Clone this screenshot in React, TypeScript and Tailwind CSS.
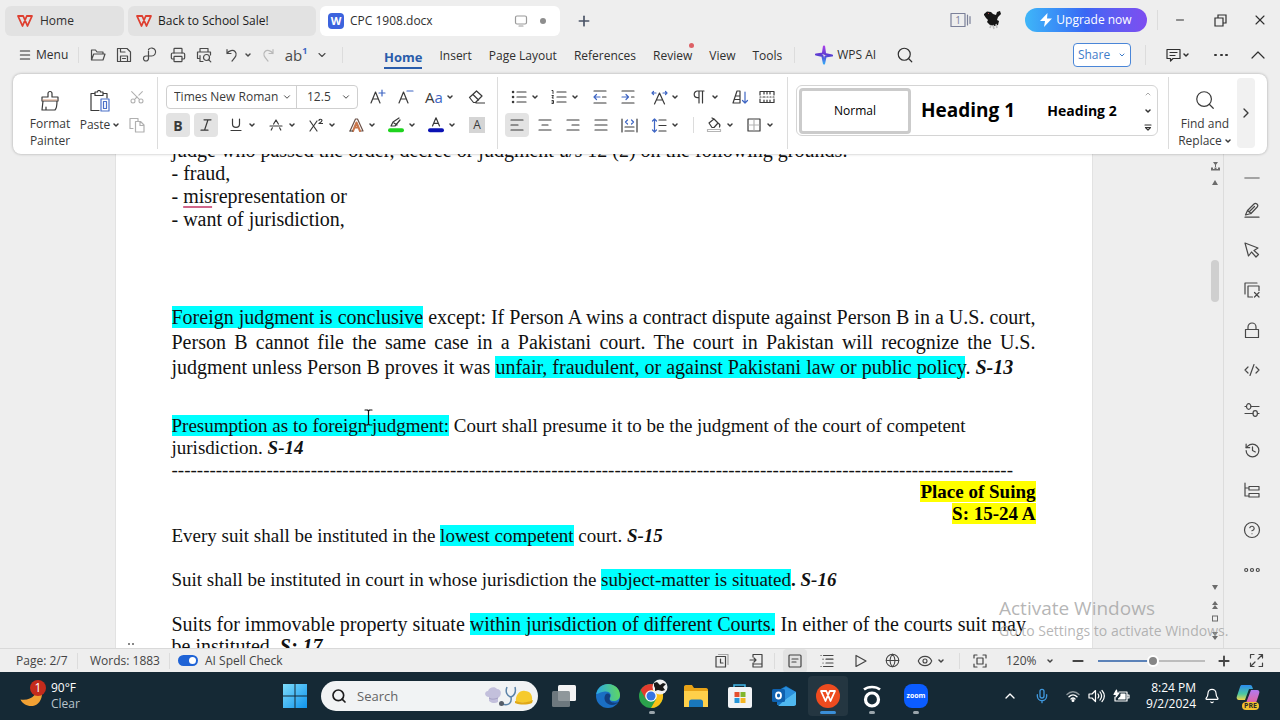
import { ReactNode } from 'react';
import {
  Bell,
  ChevronDown,
  ChevronRight,
  ChevronUp,
  CircleHelp,
  Eye,
  Globe,
  History,
  Menu,
  Mic,
  Minus,
  Plus,
  Printer,
  Scissors,
  Search,
  X,
} from 'lucide-react';

interface DrawingProps {
  w?: number;
  h?: number;
  children: ReactNode;
  className?: string;
}

// Line drawing on a pixel grid, one unit per pixel
function Line({ w = 16, h = 16, children, className }: DrawingProps) {
  return (
    <svg
      width={w}
      height={h}
      viewBox={`0 0 ${w} ${h}`}
      fill="none"
      stroke="currentColor"
      strokeWidth="1.2"
      strokeLinecap="round"
      strokeLinejoin="round"
      className={`shrink-0 ${className ?? ''}`}
      aria-hidden="true"
    >
      {children}
    </svg>
  );
}

function Caret() {
  return <ChevronDown className="w-2 h-2 shrink-0" strokeWidth={4.5} />;
}

interface ToolProps {
  label: string;
  children: ReactNode;
  drop?: boolean;
  on?: boolean;
  className?: string;
}

function Tool({ label, children, drop, on, className }: ToolProps) {
  return (
    <button title={label} aria-label={label} className={`flex h-6 shrink-0 items-center ${className ?? ''}`}>
      <span className={`flex h-6 w-6 items-center justify-center rounded ${on ? 'bg-[#e3e3e3]' : ''}`}>{children}</span>
      {drop && <Caret />}
    </button>
  );
}

function Bar({ className }: { className?: string }) {
  return <div className={`w-px shrink-0 bg-[#dcdcdc] ${className ?? ''}`} />;
}

function WpsMark({ className }: { className?: string }) {
  return (
    <svg viewBox="0 0 16 12" className={className} fill="none" stroke="currentColor" strokeWidth="1.8" strokeLinejoin="round" aria-hidden="true">
      <path d="M1 1h5.200l4.300 10L15 1H9.800L5.500 11 1 1Z" />
    </svg>
  );
}

function TitleBar() {
  return (
    <header className="flex h-9 items-end text-[12px] text-[#2f2f2f]">
      <div className="flex items-end gap-1 pl-[5px]">
        <button className="flex h-[30px] w-[119px] items-center gap-[7px] rounded-md bg-[#e2e2e2] pl-3">
          <WpsMark className="w-4 h-3 text-[#de3f30]" />
          Home
        </button>
        <button className="flex h-[30px] w-[188px] items-center gap-[6px] rounded-md bg-[#e2e2e2] pl-2 text-[#1c1c1c]">
          <WpsMark className="w-4 h-3 text-[#de3f30]" />
          Back to School Sale!
        </button>
        <button className="flex h-[30px] w-60 items-center rounded-md bg-white pl-2 pr-3">
          <span className="mr-[6px] flex h-4 w-4 items-center justify-center rounded-sm bg-[#3c63dd] text-[11px] font-bold text-white">
            W
          </span>
          CPC 1908.docx
          <Line w={14} h={12} className="ml-auto text-[#9a9a9a]">
            <rect x="1.5" y="1" width="11" height="8" rx="1.5" />
            <path d="M5 11h4" />
          </Line>
          <span className="ml-3 mr-0.5 h-1.5 w-1.5 rounded-full bg-[#8d8d8d]" />
        </button>
      </div>
      <button aria-label="New tab" className="ml-4 flex h-[30px] items-center text-[#4a5366]">
        <Plus className="h-4 w-4" strokeWidth={2.5} />
      </button>

      <div className="ml-auto flex h-9 items-center pt-1">
        <button aria-label="Windows" className="relative mr-3 text-[#7b8099]">
          <Line w={21} h={16}>
            <rect x="1" y="1.5" width="14" height="13" />
            <path d="M17.5 3v10M20 4.500v7" />
          </Line>
          <span className="absolute left-0 top-0 w-4 text-center text-[10px] leading-4">1</span>
        </button>
        <svg width="20" height="20" viewBox="0 0 20 20" aria-hidden="true">
          <path
            d="M1 4 4 1.500l4 .5 2 2 3 1 1-3 3-1 1 3-3 3-1 3 2 1-1 4-4 1-4-1-3-3 1-2-2-2L1 5Z"
            fill="#151515"
          />
          <path d="m5 4 1-1" stroke="#b44" />
          <path d="m8 15-1 3m3-3 1 4m2-5 1 4" stroke="#bcbcbc" strokeWidth="1.5" />
        </svg>
        <button className="ml-[22px] flex h-6 w-[122px] items-center justify-center gap-1 rounded-full bg-linear-to-r from-[#3fb6f8] via-[#3a66f4] to-[#7d4df0] text-white">
          <svg width="12" height="14" viewBox="0 0 12 14" fill="currentColor" aria-hidden="true">
            <path d="M7.500 0 0 8h5l-1 6 8-8.500H7Z" />
          </svg>
          Upgrade now
        </button>
        <Bar className="ml-2.5 h-5" />
        <button aria-label="Minimize" className="ml-3.5 flex w-4 justify-center">
          <Minus className="h-3 w-3" strokeWidth={2} />
        </button>
        <button aria-label="Restore" className="ml-6 flex w-4 justify-center">
          <Line w={13} h={13}>
            <path d="M1 4h8v8H1zM4 4V1h8v8H9" strokeLinejoin="miter" />
          </Line>
        </button>
        <button aria-label="Close" className="ml-6 mr-3 flex w-4 justify-center">
          <X className="h-4 w-4" strokeWidth={1.7} />
        </button>
      </div>
    </header>
  );
}

const TABS = ['Insert', 'Page Layout', 'References', 'Review', 'View', 'Tools'];

function MenuRow() {
  return (
    <div className="flex h-[38px] items-center text-[12px] text-[#2f2f2f]">
      <button className="ml-[18px] flex w-12 items-center gap-1">
        <Menu className="h-3.5 w-3.5 shrink-0" strokeWidth={1.8} />
        Menu
      </button>
      <Bar className="ml-3 h-4" />
      <div className="ml-[7px] flex items-center gap-0.5 text-[#4a4a4a]">
        <Tool label="Open">
          <Line>
            <path d="M1.500 13V3h4l1.500 2h6v2M1.500 13l2.200-6H15l-2 6Z" />
          </Line>
        </Tool>
        <Tool label="Save">
          <Line>
            <path d="M1.500 1.500h9.500L14.500 5v9.500h-13ZM4.500 1.500V5H9M4.500 14.500V9h7v5.500M6.500 11.500h3" />
          </Line>
        </Tool>
        <Tool label="Export to PDF">
          <Line>
            <path d="M6.500 4v7.500a2.500 2.500 0 1 1-2.500-2.500h5.500a4 4 0 1 0-3-6.500" />
          </Line>
        </Tool>
        <Tool label="Print" className="ml-0.5">
          <Printer className="h-4 w-4" strokeWidth={1.8} />
        </Tool>
        <Tool label="Print preview">
          <Line>
            <path d="M4 5V1.500h8V5M3 11.500H1.500V5h13v3M4 8.500v6h3" />
            <circle cx="10.500" cy="10.500" r="3" />
            <path d="m12.800 12.800 2 2" />
          </Line>
        </Tool>
        <Tool label="Undo" drop className="ml-0.5">
          <Line w={14} h={14}>
            <path d="M2 1.500v4h4M2 5.500c2-3 6-4 8-2 3 3 0 6-3 9.500" />
          </Line>
        </Tool>
        <Tool label="Redo" className="ml-0.5 text-[#b9b9b9]">
          <Line w={14} h={14}>
            <path d="M12 1.500v4H8M12 5.500c-2-3-6-4-8-2-3 3 0 6 3 9.500" />
          </Line>
        </Tool>
        <Tool label="Text tools" className="ml-0.5">
          <span className="text-[15px] leading-5">ab</span>
          <sup className="text-[9px] font-bold text-[#3f66c4]">1</sup>
        </Tool>
        <Tool label="Customize">
          <ChevronDown className="h-3 w-3" strokeWidth={2.2} />
        </Tool>
      </div>
      <Bar className="ml-2 h-4" />

      <nav className="ml-[41px] flex h-full items-center gap-[17px] pt-0.5">
        <a href="#home" className="border-b-2 border-[#2a5caa] pt-[3px] text-[13px] font-bold leading-5 text-[#2a5caa]">
          Home
        </a>
        {TABS.map(tab => (
          <a key={tab} href={`#${tab}`} className="relative whitespace-nowrap">
            {tab}
            {tab === 'Review' && <span className="absolute -right-0.5 -top-1 h-[5px] w-[5px] rounded-full bg-[#dd6065]" />}
          </a>
        ))}
      </nav>
      <Bar className="ml-3 h-4" />
      <button className="ml-5 flex items-center gap-1 whitespace-nowrap">
        <svg width="18" height="20" viewBox="0 0 18 20" fill="none" strokeWidth="2.2" strokeLinejoin="round" aria-hidden="true">
          <defs>
            <linearGradient id="ai" x1="0" y1="0" x2="0" y2="1">
              <stop offset="0" stopColor="#a63fe8" />
              <stop offset="0.500" stopColor="#5a3bd0" />
              <stop offset="1" stopColor="#38a6f5" />
            </linearGradient>
          </defs>
          <path d="M9 1.500 10 9l7 1.500-6.500 1L9 18.500 7.500 11 1 9.500 8 8.500Z" stroke="url(#ai)" />
        </svg>
        WPS AI
      </button>
      <button aria-label="Search" className="ml-5">
        <Search className="h-[18px] w-[18px]" strokeWidth={1.6} />
      </button>

      <div className="ml-auto flex items-center">
        <button className="flex h-6 w-[58px] items-center justify-center gap-2 rounded-sm border border-[#4a86d8] bg-white text-[#3f7cc9]">
          Share
          <ChevronDown className="h-2 w-2" strokeWidth={3} />
        </button>
        <Bar className="ml-3.5 h-5" />
        <button aria-label="Comments" className="ml-5 flex items-center">
          <Line w={16} h={14}>
            <path d="M1 1.500h13v9H7l-2.500 2.500v-2.500H1ZM4 4.500h7M4 7.500h5" />
          </Line>
          <Caret />
        </button>
        <button aria-label="More" className="ml-6 flex w-3.5 justify-between">
          <span className="h-[2px] w-[3px] rounded-full bg-[#333]" />
          <span className="h-[2px] w-[3px] rounded-full bg-[#333]" />
          <span className="h-[2px] w-[3px] rounded-full bg-[#333]" />
        </button>
        <button aria-label="Collapse ribbon" className="ml-5 mr-3 flex w-5 justify-center">
          <Line w={14} h={8}>
            <path d="m1 7 6-6 6 6" />
          </Line>
        </button>
      </div>
    </div>
  );
}

function FontGroup() {
  return (
    <div className="flex flex-col gap-1">
      <div className="flex items-center">
        <div className="flex h-6 rounded border border-[#cfcfcf] text-[12px]">
          <label className="relative w-[130px] border-r border-[#cfcfcf]">
            <select aria-label="Font" className="h-full w-full appearance-none pl-[7px] outline-none">
              <option>Times New Roman</option>
            </select>
            <ChevronDown className="absolute right-1 top-1.5 h-2.5 w-2.5" strokeWidth={2.2} />
          </label>
          <label className="relative w-15">
            <select aria-label="Font size" className="h-full w-full appearance-none pl-2.5 outline-none">
              <option>12.5</option>
            </select>
            <ChevronDown className="absolute right-1.5 top-1.5 h-2.5 w-2.5" strokeWidth={2.2} />
          </label>
        </div>
        <Tool label="Grow font" className="ml-2">
          <Line>
            <path d="M1 14 5.500 3 10 14M2.600 10h5.800" />
            <path d="M12 1v6M9 4h6" stroke="#3f66c4" />
          </Line>
        </Tool>
        <Tool label="Shrink font" className="ml-1">
          <Line>
            <path d="M1 14 5.500 3 10 14M2.600 10h5.800" />
            <path d="M9 2h6" stroke="#3f66c4" />
          </Line>
        </Tool>
        <Tool label="Change case" drop className="ml-1 text-[15px]">
          <span>
            A<span className="text-[#3f66c4]">a</span>
          </span>
        </Tool>
        <Tool label="Clear formatting" className="ml-2.5">
          <Line w={17} h={14}>
            <path d="M1.500 7.500 8.500 1l5.500 5-6.500 6.500H5.500ZM5 4.500l5.500 5.500M8 13h8.500" />
          </Line>
        </Tool>
      </div>
      <div className="flex items-center">
        <Tool label="Bold" on>
          <span className="text-[14px] font-bold">B</span>
        </Tool>
        <Tool label="Italic" on className="ml-1">
          <Line w={12} h={12}>
            <path d="M4 .8h7M1 11.200h7M8 .8 4.500 11.200" />
          </Line>
        </Tool>
        <Tool label="Underline" drop className="ml-1.5">
          <Line w={12} h={14}>
            <path d="M2.500 1v5c0 4.500 7 4.500 7 0V1M1 12.500h10" />
          </Line>
        </Tool>
        <Tool label="Strikethrough" drop className="ml-2">
          <Line w={14} h={12}>
            <path d="M1 7h12M4.600 5 7 1l2.400 4M3.400 8.800 2.200 11M10.600 8.800l1.200 2.200" />
          </Line>
        </Tool>
        <Tool label="Superscript" drop className="ml-2">
          <Line w={14} h={14}>
            <path d="m1 3 7 10M8 3 1 13" />
            <path d="M10 2.500C10 .8 13 .8 13 2.500 13 3.500 10 5.500 10 5.500h3.500" />
          </Line>
        </Tool>
        <Tool label="Text effects" drop className="ml-2">
          <Line w={15} h={14}>
            <path d="M1 13 6.500 1h2L14 13h-2.500" stroke="#6a5148" />
            <path d="M4 13 7.500 4.500 11 13M5.500 9.500h4" stroke="#c9764c" strokeWidth="2" />
            <path d="M1 13h2.500" />
          </Line>
        </Tool>
        <Tool label="Highlight" drop className="ml-2">
          <Line w={16} h={16}>
            <path d="m3 9 2-4 6-4M3 9h4l5-6M6 6l3 2" />
            <path d="M2 13.200h12" stroke="#1ed31e" strokeWidth="4" />
          </Line>
        </Tool>
        <Tool label="Font color" drop className="ml-2">
          <Line w={16} h={16}>
            <path d="M4.500 9 8 .8 11.500 9M5.700 6.300h4.600" />
            <path d="M2 13.200h12" stroke="#0a12b4" strokeWidth="4" />
          </Line>
        </Tool>
        <Tool label="Shading" className="ml-[9px]">
          <span className="flex h-4 w-4 items-center justify-center bg-[#d5d5d5] text-[12px]">A</span>
        </Tool>
      </div>
    </div>
  );
}

function ParagraphGroup() {
  return (
    <div className="flex flex-col gap-1">
      <div className="flex items-center">
        <Tool label="Bullets" drop className="ml-0.5">
          <Line>
            <path d="M6 3h9M6 8h9M6 13h9" />
            <path d="M2 3h.1M2 8h.1M2 13h.1" strokeWidth="2.500" />
          </Line>
        </Tool>
        <Tool label="Numbering" drop className="ml-2">
          <Line>
            <path d="M6 3h9M6 8h9M6 13h9" />
            <path d="M1 1.500h1v3M1 6.500h1.500L1 9h1.500M1 11.500h1.500v3H1M1 13h1" strokeWidth="1" />
          </Line>
        </Tool>
        <Tool label="Decrease indent" className="ml-[9px]">
          <Line w={14} h={14}>
            <path d="M1 1h12M9.500 7h3.500M1 13h12" />
            <path d="M7 7H1m2.500-2.500L1 7l2.500 2.500" stroke="#3f66c4" />
          </Line>
        </Tool>
        <Tool label="Increase indent" className="ml-1">
          <Line w={14} h={14}>
            <path d="M1 1h12M10.500 7H13M1 13h12" />
            <path d="M1 7h6.500M5 4.500 7.500 7 5 9.500" stroke="#3f66c4" />
          </Line>
        </Tool>
        <Tool label="Text scaling" drop className="ml-[7px]">
          <Line w={17} h={15}>
            <path d="m3.500 14 5-11 5 11M5.500 10h6" />
            <path d="M1 3h4M2.500 1.500 1 3l1.500 1.500M12 3h4m-1.500-1.500L16 3l-1.500 1.500" stroke="#3f66c4" />
          </Line>
        </Tool>
        <Tool label="Show marks" drop className="ml-2">
          <Line w={12} h={14}>
            <path d="M11 1H4.500a3.300 3.300 0 0 0 0 6.600H6M6 1v12M9.500 1v12" />
          </Line>
        </Tool>
        <Tool label="Sort" className="ml-[9px]">
          <Line w={17} h={15}>
            <path d="M5 1h3v12H1L5 1ZM3.500 6H8M2.500 9.500H8" />
            <path d="M13 2v11m-2.500-2.500L13 13l2.500-2.500" stroke="#3f66c4" />
          </Line>
        </Tool>
        <Tool label="Tabs" className="ml-[3px]">
          <Line w={16} h={14}>
            <path d="M1 5V1.500h14V5M1 9v3.500h14V9M5 1.500V4M8 1.500V4M11 1.500V4M5 12.500V10M8 12.500V10M11 12.500V10M1 7h1m2 0h2m2 0h1m2 0h1m2 0h1" />
          </Line>
        </Tool>
      </div>
      <div className="flex items-center">
        <div className="flex gap-1">
          <Tool label="Align left" on>
            <Line w={14} h={12}>
              <path d="M1 1h12M1 6h7M1 11h12" />
            </Line>
          </Tool>
          <Tool label="Align center">
            <Line w={14} h={12}>
              <path d="M1 1h12M4 6h6M1 11h12" />
            </Line>
          </Tool>
          <Tool label="Align right">
            <Line w={14} h={12}>
              <path d="M1 1h12M6 6h7M1 11h12" />
            </Line>
          </Tool>
          <Tool label="Justify">
            <Line w={14} h={12}>
              <path d="M1 1h12M1 6h12M1 11h12" />
            </Line>
          </Tool>
          <Tool label="Distribute">
            <Line w={17} h={15}>
              <path d="M1 1v13M16 1v13M4 9h9M4 13h9" />
              <path d="M6.500 2 4.500 4l2 2M10.500 2l2 2-2 2" stroke="#3f66c4" />
            </Line>
          </Tool>
        </div>
        <Tool label="Line spacing" drop className="ml-1.5">
          <Line w={16} h={15}>
            <path d="M8 2h7M8 7.500h7M8 13h7" />
            <path d="M3.500 1v13M1.500 3l2-2 2 2M1.500 12l2 2 2-2" stroke="#3f66c4" />
          </Line>
        </Tool>
        <Bar className="ml-3.5 h-4" />
        <Tool label="Fill" drop className="ml-2">
          <Line w={16} h={16}>
            <path d="m3 6 5-4 4 4-4 4.500H6ZM8 2 6 1M12 6c2 1 2 3 1.500 4" />
            <path d="M1.500 12.500h13v2h-13Z" stroke="#b5b5b5" />
          </Line>
        </Tool>
        <Tool label="Borders" drop className="ml-2">
          <Line w={14} h={14}>
            <rect x="1" y="1" width="12" height="12" />
            <path d="M7 2v10M2 7h10" stroke="#b5b5b5" />
          </Line>
        </Tool>
      </div>
    </div>
  );
}

function Ribbon() {
  return (
    <section
      aria-label="Home tools"
      className="relative z-10 mx-[13px] flex h-20 items-start rounded-lg bg-white pt-[11px] text-[#3a3a3a] shadow-[0_0_3px_rgba(0,0,0,0.3)]"
    >
      <button className="ml-3 flex w-[50px] flex-col items-center pt-[5px] text-[12px] leading-[17px]">
        <Line w={20} h={22} className="mb-[3px]">
          <path d="M8 7V3.500a2 2 0 0 1 4 0V7h6v4H2V7ZM3 11 2 20h13c2-2 2-5 2-9M6 17v3" />
          <path d="M3 10h14" stroke="#d9a184" />
        </Line>
        Format Painter
      </button>
      <button className="flex w-[50px] flex-col items-center pt-[5px] text-[12px] leading-[17px]">
        <Line w={22} h={22} className="mb-[4px]">
          <path d="M6 3.500H2v17h8M14 3.500h4V8M6 2h2.500a1.500 1.500 0 0 1 3 0H14v3.500H6Z" />
          <path d="M12 9h8v12h-8ZM14.500 11.500h3v7h-3Z" stroke="#4a70c8" />
        </Line>
        <span className="flex items-center gap-0.5">
          Paste <Caret />
        </span>
      </button>
      <div className="flex flex-col gap-1 text-[#b0b0b0]">
        <Tool label="Cut">
          <Scissors className="h-4 w-4 -rotate-90" strokeWidth={1.6} />
        </Tool>
        <Tool label="Copy">
          <Line>
            <path d="M4 11.500H1v-10h8V4M6.500 4.500h5l3.500 3.500v7H6.500ZM11 5v3.500h4" />
          </Line>
        </Tool>
      </div>
      <Bar className="-mt-2 ml-2 h-[72px]" />
      <div className="ml-2">
        <FontGroup />
      </div>
      <Bar className="-mt-2 ml-2 h-[72px]" />
      <div className="ml-[7px]">
        <ParagraphGroup />
      </div>
      <Bar className="-mt-2 ml-2 h-[72px]" />

      <div className="ml-2 flex h-[51px] flex-1 items-center rounded-md border border-[#d4d4d4] pl-0.5 text-black">
        <button className="h-[46px] w-28 shrink-0 rounded border-3 border-[#cbcbcb] text-[12px]">Normal</button>
        <button className="flex-1 whitespace-nowrap text-center font-['Open_Sans'] text-[19px] font-bold">Heading 1</button>
        <button className="flex-1 whitespace-nowrap text-center font-['Open_Sans'] text-[14px] font-bold">Heading 2</button>
        <div className="flex h-full w-[18px] flex-col items-center justify-around text-[#333]">
          <button aria-label="Previous styles" className="text-[#aaa]">
            <ChevronUp className="h-2 w-2" strokeWidth={3} />
          </button>
          <button aria-label="Next styles">
            <Caret />
          </button>
          <button aria-label="All styles">
            <Line w={8} h={7}>
              <path d="M1 1h6M1.500 3.500h5L4 6Z" />
            </Line>
          </button>
        </div>
      </div>
      <Bar className="-mt-2 ml-2.5 h-[72px]" />
      <button className="ml-2 flex w-14 flex-col items-center pt-1 text-[12px] leading-[17px]">
        <Search className="mb-1 h-[22px] w-[22px]" strokeWidth={1.3} />
        Find and
        <span className="flex items-center gap-0.5">
          Replace <Caret />
        </span>
      </button>
      <button aria-label="Scroll ribbon" className="-mt-[7px] ml-1 mr-3 flex h-[70px] w-[18px] items-center justify-center rounded bg-[#f1f1f1]">
        <ChevronRight className="h-4 w-4 shrink-0" strokeWidth={2} />
      </button>
    </section>
  );
}

function Mark({ children }: { children: ReactNode }) {
  return <mark className="bg-[#00ffff] text-inherit">{children}</mark>;
}

function Section({ children }: { children: ReactNode }) {
  return <b className="italic">{children}</b>;
}

function Page() {
  return (
    <article className="w-[978px] shrink-0 border-x border-[#e2e2e2] bg-white px-14 font-['Liberation_Serif',serif] text-[19px] leading-[22px] whitespace-nowrap text-[#111]">
      <div className="-mt-[15px] text-[20px] leading-[23px]">
        <p>judge who passed the order, decree or judgment u/s 12 (2) on the following grounds:</p>
        <p>- fraud,</p>
        <p>
          - <span className="underline decoration-[#d0668a] decoration-2 underline-offset-3">mis</span>representation or
        </p>
        <p>- want of jurisdiction,</p>
      </div>
      <div className="mt-[74px] text-[20px] leading-[25px]">
        <p className="[text-align-last:justify]">
          <Mark>Foreign judgment is conclusive</Mark> except: If Person A wins a contract dispute against Person B in a U.S. court,
        </p>
        <p className="[text-align-last:justify]">
          Person B cannot file the same case in a Pakistani court. The court in Pakistan will recognize the U.S.
        </p>
        <p>
          judgment unless Person B proves it was <Mark>unfair, fraudulent, or against Pakistani law or public policy</Mark>.{' '}
          <Section>S-13</Section>
        </p>
      </div>
      <p className="mt-[35px]">
        <Mark>Presumption as to foreign judgment:</Mark> Court shall presume it to be the judgment of the court of competent
        <br />
        jurisdiction. <Section>S-14</Section>
      </p>
      <p>{'-'.repeat(133)}</p>
      <p className="text-right font-bold">
        <mark className="bg-[#ffff00]">Place of Suing</mark>
        <br />
        <mark className="bg-[#ffff00]">S: 15-24 A</mark>
      </p>
      <p>
        Every suit shall be instituted in the <Mark>lowest competent</Mark> court. <Section>S-15</Section>
      </p>
      <p className="mt-[22px]">
        Suit shall be instituted in court in whose jurisdiction the <Mark>subject-matter is situated</Mark>
        <b>.</b> <Section>S-16</Section>
      </p>
      <p className="mt-[22px] text-[20px]">
        Suits for immovable property situate <Mark>within jurisdiction of different Courts.</Mark> In either of the courts suit may
        <br />
        be instituted. <Section>S: 17</Section>
      </p>
    </article>
  );
}

function ScrollRail() {
  return (
    <div className="flex w-4 shrink-0 flex-col items-center py-2 text-[#6b6b6b]">
      <svg width="9" height="9" viewBox="0 0 9 9" fill="currentColor" aria-hidden="true">
        <path d="M2 0h5L4.500 3.500ZM0 5.500h2v1.500h1.500V5.500h2V7H7V5.500h2V8.500H0ZM4 3h1v2H4Z" />
      </svg>
      <svg width="6" height="5" viewBox="0 0 6 5" fill="currentColor" className="mt-[9px]" aria-hidden="true">
        <path d="M0 5 3 0l3 5Z" />
      </svg>
      <div className="mt-[75px] h-[42px] w-2 rounded-full bg-[#cfcfcf]" />
      <svg width="6" height="55" viewBox="0 0 6 55" fill="currentColor" className="mt-auto" aria-hidden="true">
        <path d="M0 0h6L3 5ZM0 20l3-4 3 4ZM0 24l3-4 3 4ZM0 47h6l-3 4ZM0 51h6l-3 4Z" />
        <rect x="0.500" y="31" width="5" height="5" fill="none" stroke="currentColor" />
      </svg>
    </div>
  );
}

function SidePanel() {
  return (
    <aside className="flex w-[57px] shrink-0 flex-col items-center border-l border-[#dcdcdc] pt-1 text-[#484848]">
      {[
        { label: 'Collapse', icon: <Line><path d="M1 8h14" strokeWidth="1.600" stroke="#8a8a8a" /></Line> },
        { label: 'Pen', icon: <Line><path d="M1 15.200h14M1.500 13l2-4.500L10 2c1.700-1.700 5 .8 3.200 3L7 11.500ZM5.500 9.500l5-5M3.500 8.500l3.500 3" /></Line> },
        { label: 'Select', icon: <Line><path d="m1 1 3.500 13 3-4 4.500 5 2.500-2.500-4.500-4 4-2.500Z" /></Line> },
        { label: 'Remove copy', icon: <Line><path d="M1 12V1h12M8.500 15H4V4h11v4.500M10.500 10.500l4.500 4.500M15 10.500 10.500 15" /></Line> },
        { label: 'Protect', icon: <Line><path d="M1.500 7.500h13v8h-13ZM4 7.500V5a4 4 0 0 1 8 0v2.500" /></Line> },
        { label: 'Code', icon: <Line><path d="M4 5 1 8l3 3M12 5l3 3-3 3M10 2.500 6 13.500" /></Line> },
        { label: 'Settings', icon: <Line><path d="M1 4.500h1.500M7 4.500h8M1 11.500h8M13.500 11.500H15" /><ellipse cx="4.700" cy="4.500" rx="2.200" ry="2.800" /><ellipse cx="11.200" cy="11.500" rx="2.200" ry="2.800" /></Line> },
        { label: 'History', icon: <History className="h-[17px] w-[17px]" strokeWidth={1.7} /> },
        { label: 'Outline', icon: <Line><path d="M1 1v13h3M1 6h3M5 4.500h10V8H5ZM5 11.500h10V15H5Z" /></Line> },
        { label: 'Help', icon: <CircleHelp className="h-[18px] w-[18px]" strokeWidth={1.6} /> },
        { label: 'More', icon: <Line><circle cx="2.200" cy="8" r="1.500" /><circle cx="8" cy="8" r="1.500" /><circle cx="13.800" cy="8" r="1.500" /></Line> },
      ].map(item => (
        <button
          key={item.label}
          aria-label={item.label}
          title={item.label}
          className="flex h-10 w-10 shrink-0 items-center justify-center first:-mb-2"
        >
          {item.icon}
        </button>
      ))}
    </aside>
  );
}

function StatusBar() {
  return (
    <footer className="flex h-6 shrink-0 items-center border-t border-[#d9d9d9] text-[12px] text-[#444]">
      <span className="ml-4 w-[61px]">Page: 2/7</span>
      <Bar className="h-4" />
      <span className="ml-3 w-[79px]">Words: 1883</span>
      <Bar className="h-4" />
      <label className="ml-2 flex items-center gap-[7px]">
        <input type="checkbox" defaultChecked className="peer sr-only" />
        <span className="flex h-[11px] w-5 items-center justify-end rounded-full bg-[#1f63d6] px-0.5">
          <span className="h-[7px] w-[7px] rounded-full bg-white" />
        </span>
        AI Spell Check
      </label>

      <div className="ml-auto flex items-center">
        <Tool label="Recent">
          <Line w={14} h={15}>
            <path d="M1 3.500h9.500v10.500H1Z" />
            <path d="M3.500 1.500h9.500v10" stroke="#a5a5a5" />
            <path d="M5.500 6v4H8" />
          </Line>
        </Tool>
        <Tool label="Send to phone" className="ml-2.5">
          <Line w={14} h={15}>
            <path d="M4 4V1.500h9v12.500H4V10M1 7h6M5 5l2 2-2 2M4 11h9" />
          </Line>
        </Tool>
        <Bar className="ml-1.5 h-4" />
        <Tool label="Page view" on className="ml-2">
          <Line w={14} h={14}>
            <rect x="1" y="1" width="12" height="12" rx="1" />
            <path d="M4 5h6M4 8h4" />
          </Line>
        </Tool>
        <Tool label="Outline view" className="ml-2">
          <Line w={14} h={14}>
            <path d="M3.500 1.500H13M6 5.200h7M6 9H13M3.500 12.500H13M1 1.500h.1M3 5.200h.1M3 9h.1M1 12.500h.1" />
          </Line>
        </Tool>
        <Tool label="Play" className="ml-[9px]">
          <Line w={13} h={14}>
            <path d="M2 1.500v11L12 7Z" />
          </Line>
        </Tool>
        <Tool label="Web view" className="ml-2">
          <Globe className="h-[15px] w-[15px]" strokeWidth={1.7} />
        </Tool>
        <Tool label="Eye care" drop className="ml-[9px]">
          <Eye className="h-4 w-4" strokeWidth={1.7} />
        </Tool>
        <Bar className="ml-3.5 h-4" />
        <Tool label="Fit page" className="ml-2">
          <Line w={14} h={14}>
            <path d="M1 4V1h3M10 1h3v3M13 10v3h-3M4 13H1v-3M4 4h6v6H4Z" />
          </Line>
        </Tool>
        <button className="ml-3.5 flex w-12 items-center justify-between">
          120% <Caret />
        </button>
        <button aria-label="Zoom out" className="ml-4">
          <Minus className="h-4 w-4" strokeWidth={2.8} />
        </button>
        <input
          type="range"
          aria-label="Zoom"
          min={0}
          max={100}
          defaultValue={52}
          className="ml-3 h-0.5 w-[107px] appearance-none bg-linear-to-r from-[#5b82b8] from-52% to-[#bdbdbd] to-52% [&::-webkit-slider-thumb]:h-3 [&::-webkit-slider-thumb]:w-3 [&::-webkit-slider-thumb]:appearance-none [&::-webkit-slider-thumb]:rounded-full [&::-webkit-slider-thumb]:border-2 [&::-webkit-slider-thumb]:border-white [&::-webkit-slider-thumb]:bg-[#858585]"
        />
        <button aria-label="Zoom in" className="ml-[11px]">
          <Plus className="h-4 w-4" strokeWidth={2.8} />
        </button>
        <button aria-label="Full screen" className="ml-[17px] mr-4">
          <Line w={15} h={15}>
            <path d="M5 1.500H1.500V5M10 1.500h3.500V5M13.500 10v3.500H10M5 13.500H1.500V10M9 6l4-4M6 9l-4 4" />
          </Line>
        </button>
      </div>
    </footer>
  );
}

const APPS = [
  {
    name: 'Task view',
    running: '',
    icon: (
      <svg width="26" height="24" viewBox="0 0 26 24">
        <rect x="7" y="1" width="18" height="16" rx="1.500" fill="#f3f3f3" />
        <rect x="1" y="7" width="18" height="16" rx="1.500" fill="#7d868b" fillOpacity=".85" />
      </svg>
    ),
  },
  {
    name: 'Edge',
    running: '',
    icon: (
      <svg width="26" height="26" viewBox="0 0 26 26">
        <defs>
          <linearGradient id="edge" x1="0" y1="0.300" x2="1" y2="0.200">
            <stop offset="0" stopColor="#2aa8e4" />
            <stop offset="1" stopColor="#62d85b" />
          </linearGradient>
        </defs>
        <circle cx="13" cy="13" r="12" fill="#1a6fc4" />
        <path d="M1.200 11C2.500 4.500 7.500 1 13 1c7 0 12 5 12 11 0 4-3 6-6.500 6-3 0-4.500-1.500-3.500-3 2.500-4-1-7-5-6.500-4 .3-7 2.500-8.800 2.500Z" fill="url(#edge)" />
        <path d="M10.500 11.500c-3 5 1 10.500 6.500 10.500 3 0 5.500-1.500 6.500-3-4 1.500-9 .5-9-3 0-1.800 1-2.500.5-4-.8-2-3.500-2-4.500-.5Z" fill="#123f80" />
      </svg>
    ),
  },
  {
    name: 'Chrome',
    running: 'w-1.5 bg-[#9aa5ac]',
    icon: (
      <svg width="34" height="34" viewBox="0 0 34 34" className="-mt-1">
        <circle cx="16" cy="19" r="12" fill="#2ba24c" />
        <path d="M5.600 13A12 12 0 0 1 26.400 13H16l-5.200 9Z" fill="#e33b2e" />
        <path d="M26.400 13A12 12 0 0 1 16 31l5.200-9L16 13Z" fill="#fbc116" />
        <circle cx="16" cy="19" r="5.800" fill="#fff" />
        <circle cx="16" cy="19" r="4.500" fill="#3574e2" />
        <circle cx="25" cy="10" r="7.500" fill="#f0f0f0" />
        <path d="m19 6 3-1 3 3 3-2 3 1-3 3 2 3-3 1-4-1-3 1v-3l-1-2Z" fill="#191919" />
      </svg>
    ),
  },
  {
    name: 'File Explorer',
    running: '',
    icon: (
      <svg width="26" height="24" viewBox="0 0 26 24">
        <path d="M1 3c0-1 .5-2 2-2h6l2 3h12c1.500 0 2 1 2 2v16H1Z" fill="#e8a317" />
        <path d="M1 7h24v16H1Z" fill="#ffd04a" />
        <path d="M6 23v-5c0-1.500 1-2.500 2.500-2.500h9c1.500 0 2.500 1 2.500 2.500v5Z" fill="#1977bb" />
      </svg>
    ),
  },
  {
    name: 'Store',
    running: '',
    icon: (
      <svg width="26" height="26" viewBox="0 0 26 26">
        <path d="M7 6V2h11v4" fill="none" stroke="#40b5e6" strokeWidth="1.500" />
        <rect x="1" y="4" width="24" height="21" rx="2" fill="#f1f3f5" />
        <path d="M7.500 9h5v5h-5Z" fill="#e5502e" />
        <path d="M13.500 9h5v5h-5Z" fill="#80b62c" />
        <path d="M7.500 15h5v5h-5Z" fill="#2696d8" />
        <path d="M13.500 15h5v5h-5Z" fill="#f4b522" />
      </svg>
    ),
  },
  {
    name: 'Outlook',
    running: '',
    icon: (
      <svg width="26" height="24" viewBox="0 0 26 24">
        <path d="m6 7 9-5 10 6v13H6Z" fill="#1574c4" />
        <path d="m9 6 6-3 10 5-10 7-6-3Z" fill="#2a8fdc" />
        <path d="M25 8v12c0 1-1 2-2 2H7l8-7Z" fill="#4fb8f0" />
        <rect x="1" y="5" width="13" height="13" rx="1.500" fill="#0f61ae" />
        <ellipse cx="7.500" cy="11.500" rx="2.500" ry="3" fill="none" stroke="#fff" strokeWidth="1.800" />
      </svg>
    ),
  },
  {
    name: 'WPS Office',
    running: 'w-4 bg-[#3b8fd8]',
    icon: (
      <span className="flex h-6 w-6 items-center justify-center rounded-full bg-[#ee4b1f] text-white">
        <WpsMark className="w-4 h-3" />
      </span>
    ),
  },
  {
    name: 'Recorder',
    running: 'w-1.5 bg-[#9aa5ac]',
    icon: (
      <svg width="20" height="24" viewBox="0 0 20 24" fill="none" stroke="#fff" strokeWidth="3.200">
        <circle cx="10" cy="15.500" r="6.500" />
        <path d="M2 5.500C6 2 14 2 18 5.500" strokeWidth="2.500" />
      </svg>
    ),
  },
  {
    name: 'Zoom',
    running: 'w-1.5 bg-[#9aa5ac]',
    icon: (
      <span className="flex h-6 w-6 items-center justify-center rounded-lg bg-[#0b5cff] text-[7px] font-bold text-white">zoom</span>
    ),
  },
];

function Taskbar() {
  return (
    <div className="flex h-12 shrink-0 items-center bg-[#152935] text-[12px] leading-4 text-white">
      <button className="flex w-[283px] items-center text-left">
        <span className="relative ml-5 flex h-8 w-[26px]">
          <svg width="24" height="30" viewBox="0 0 24 30" aria-hidden="true">
            <path d="M17 6c1 8-5 15-16.500 13.500C4 28 20 30 22 15c0-4-2-8-5-9Z" fill="#f2a134" />
          </svg>
          <span className="absolute top-0 right-0 flex h-4 w-4 items-center justify-center rounded-full bg-[#c42b1c]">1</span>
        </span>
        <span className="ml-[5px]">
          90°F
          <br />
          <span className="text-[#b8c4cb]">Clear</span>
        </span>
      </button>

      <button aria-label="Start" className="mr-3.5">
        <svg width="24" height="24" viewBox="0 0 24 24">
          <defs>
            <linearGradient id="win" x1="0" y1="0" x2="1" y2="1">
              <stop offset="0" stopColor="#7ddcfb" />
              <stop offset="1" stopColor="#0f93ec" />
            </linearGradient>
          </defs>
          <path d="M0 0h11.500v11.500H0ZM12.500 0H24v11.500H12.500ZM0 12.500h11.500V24H0ZM12.500 12.500H24V24H12.500Z" fill="url(#win)" />
        </svg>
      </button>
      <label className="flex h-[30px] w-[217px] items-center rounded-full bg-[#f1f3f4] pl-2.5 pr-1 text-[#1c1c1c]">
        <Search className="h-4 w-4 shrink-0" strokeWidth={2.5} />
        <input aria-label="Search" placeholder="Search" className="ml-2.5 w-0 flex-1 text-[13px] outline-none placeholder:text-[#646464]" />
        <svg width="50" height="22" viewBox="0 0 50 22" aria-hidden="true">
          <path d="M5 16v-4C0 12 0 6 4 6c1-4 7-5 9-2 5 0 5 7 1 9v4c-3 2-7 1-9-1Z" fill="#c3c0dc" />
          <path d="M5 13c3 2 6 1 9 0" stroke="#a49fc4" fill="none" />
          <path d="M23 2c-2 5 0 9 4 10 4-2 5-6 4-10M27 12c1 6-2 9-9 7" fill="none" stroke="#5b83a8" strokeWidth="1.500" />
          <circle cx="17.500" cy="18.500" r="2.500" fill="#555d68" />
          <path d="M32 17c-1-7 4-12 9-11 5 0 8 4 7 10l-7 2Z" fill="#f6ca2d" />
          <path d="M31 16c6 2 12 2 18-1l-1 3c-5 2-12 2-17 0Z" fill="#e0a817" />
        </svg>
      </label>
      <div className="ml-1 flex">
        {APPS.map(app => (
          <button
            key={app.name}
            aria-label={app.name}
            className={`relative mx-0.5 flex h-10 w-10 items-center justify-center rounded ${app.name === 'WPS Office' ? 'bg-[#243641]' : ''}`}
          >
            {app.icon}
            {app.running && <span className={`absolute bottom-0.5 h-[3px] rounded-full ${app.running}`} />}
          </button>
        ))}
      </div>

      <div className="ml-auto flex items-center">
        <button aria-label="Hidden icons">
          <ChevronUp className="h-4 w-4" strokeWidth={2} />
        </button>
        <button aria-label="Microphone" className="ml-4 text-[#3f97dc]">
          <Mic className="h-4 w-4" strokeWidth={2} />
        </button>
        <button aria-label="Network, volume and battery" className="ml-4 flex items-center gap-2">
          <svg width="14" height="12" viewBox="0 0 14 12" fill="none" stroke="currentColor" strokeWidth="1.400" strokeLinecap="round">
            <path d="M1 4.500C4.500.8 9.500.8 13 4.500" opacity=".5" />
            <path d="M3 6.800c2.500-2.600 5.500-2.600 8 0M5 9c1.300-1.300 2.700-1.300 4 0" />
            <circle cx="7" cy="10.500" r=".8" fill="currentColor" />
          </svg>
          <Line w={17} h={14}>
            <path d="M1 5v4h3l3.500 3.500v-11L4 5ZM10 5c1 1.300 1 2.700 0 4M12 3c2 2.500 2 5.500 0 8M14 1.500c3 3.500 3 7.500 0 11" />
          </Line>
          <Line w={17} h={14}>
            <path d="M6 3h8v9H2V8M14 6h2v3h-2" />
            <path d="M8 5h4v5H5.500L8 7.500ZM3.500 1 1 5.500h2.500L3 8l3-4H4Z" fill="currentColor" />
          </Line>
        </button>
        <button className="ml-2.5 w-14 whitespace-nowrap text-right">
          8:24 PM
          <br />
          9/2/2024
        </button>
        <button aria-label="Notifications" className="ml-2">
          <Bell className="h-4 w-4" strokeWidth={1.8} />
        </button>
        <button aria-label="Copilot" className="relative ml-4 mr-5">
          <svg width="24" height="24" viewBox="0 0 24 24">
            <defs>
              <linearGradient id="copl" x1="0" y1="0" x2="0" y2="1">
                <stop offset="0" stopColor="#2b8cf0" />
                <stop offset="0.600" stopColor="#4cc7a0" />
                <stop offset="1" stopColor="#f1d54a" />
              </linearGradient>
              <linearGradient id="copr" x1="0" y1="0" x2="0" y2="1">
                <stop offset="0" stopColor="#b07af0" />
                <stop offset="1" stopColor="#f0608a" />
              </linearGradient>
            </defs>
            <path d="M6 1h8c2 0 2 1.500 3 4h-4L9 16H3c-2 0-3-2-2-4L4 3c.5-1.500 1-2 2-2Z" fill="url(#copl)" />
            <path d="M15 6h6c2 0 3 1.500 2 4l-3 9c-.5 2-2 3-3 3h-7c-1 0-1-2 0-3Z" fill="url(#copr)" />
          </svg>
          <span className="absolute -bottom-0.5 left-1.5 rounded-sm bg-[#f3c12f] px-0.5 text-[7px] font-bold leading-2 text-[#2b2b2b]">PRE</span>
        </button>
      </div>
    </div>
  );
}

export default function App() {
  return (
    <div className="flex h-screen flex-col overflow-hidden bg-[#eeeeee] font-['Open_Sans','Noto_Sans',sans-serif]">
      <div className="shrink-0">
        <TitleBar />
        <MenuRow />
        <Ribbon />
      </div>
      <div className="relative flex min-h-0 flex-1 overflow-hidden">
        <main className="flex flex-1 justify-center">
          <Page />
        </main>
        <ScrollRail />
        <SidePanel />

        {/* Paragraph grip in the margin */}
        <span className="absolute bottom-0 left-32 flex gap-0.5 pb-[3px]">
          <span className="h-0.5 w-0.5 bg-[#888]" />
          <span className="h-0.5 w-0.5 bg-[#888]" />
        </span>

        {/* Text cursor */}
        <Line w={9} h={17} className="absolute left-[364px] top-[255px] text-[#111]">
          <path d="M1 1h2.500l1 1 1-1H8M4.500 2v13M1 16h2.500l1-1 1 1H8" />
        </Line>

        <div className="pointer-events-none absolute bottom-1.5 right-[53px] w-[228px] whitespace-nowrap text-[#9d9d9d]/75">
          <p className="text-[19px] leading-6">Activate Windows</p>
          <p className="text-[14px] leading-[22px]">Go to Settings to activate Windows.</p>
        </div>
      </div>
      <StatusBar />
      <Taskbar />
    </div>
  );
}
